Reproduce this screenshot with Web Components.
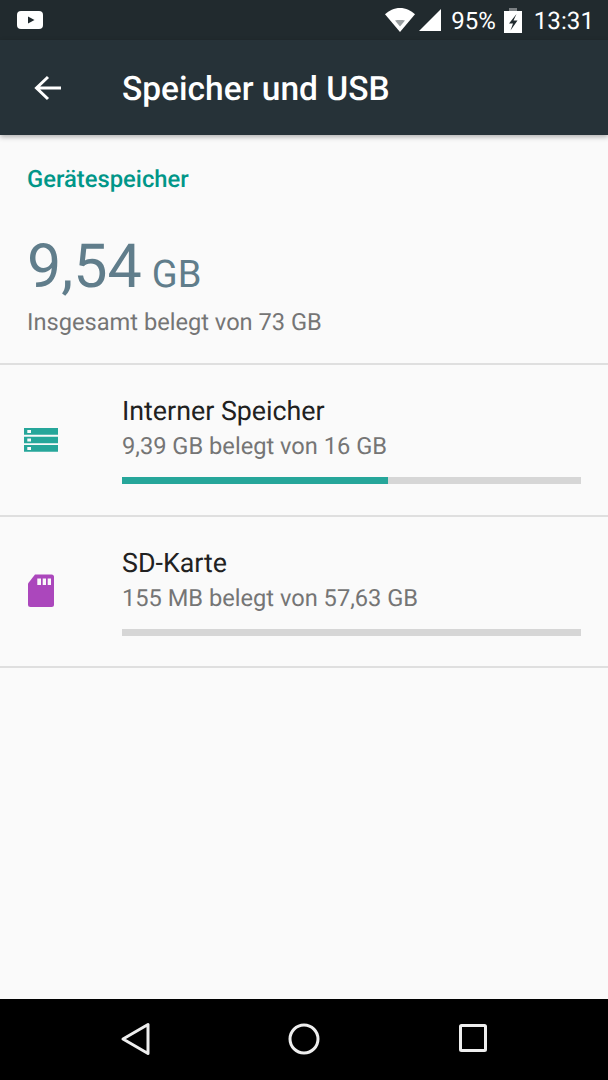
<!DOCTYPE html>
<html><head><meta charset="utf-8"><style>
html,body{margin:0;padding:0;height:100%}
body{width:608px;height:1080px;overflow:hidden;background:#fafafa;font-family:Roboto,sans-serif;text-rendering:geometricPrecision}
</style></head><body>
<settings-screen>
<status-bar slot="top"></status-bar>
<app-bar slot="top" title="Speicher und USB"></app-bar>
<storage-summary label="Gerätespeicher" value="9,54" unit="GB" note="Insgesamt belegt von 73 GB"></storage-summary>
<storage-row h="150" name="Interner Speicher" detail="9,39 GB belegt von 16 GB" pct="58"><svg slot="icon" width="36" height="26" viewBox="0 0 36 26"><path fill="#26a69a" d="M0 1h34v6.700H0zM0 9.700h34v6.600H0zM0 18h34v6.700H0z"/><path fill="#fafafa" d="M3.300 3h3.700v3H3.300zM3.300 11.500h3.700v3H3.300zM3.300 20h3.700v3H3.300z"/></svg></storage-row>
<storage-row h="149" name="SD-Karte" detail="155 MB belegt von 57,63 GB" pct="0"><svg slot="icon" width="36" height="36" viewBox="0 1 36 36"><path fill="#ab47bc" d="M11 1.500h16.500a2.500 2.500 0 0 1 2.500 2.500v27.500a2.500 2.500 0 0 1-2.500 2.500H6.500A2.500 2.500 0 0 1 4 31.500V10.500z"/><path fill="#fafafa" d="M13.300 5.500H17v6.500h-3.700zM18.700 5.500H22v6.500h-3.300zM23.700 5.500H27v6.500h-3.300z"/></svg></storage-row>
<nav-bar slot="bottom"></nav-bar>
</settings-screen>
<script>
function def(name, render){
  customElements.define(name, class extends HTMLElement{
    connectedCallback(){
      if(this.shadowRoot) return;
      this.attachShadow({mode:'open'}).innerHTML = render(this);
    }
  });
}
def('settings-screen', ()=>`<style>
:host{display:flex;flex-direction:column;height:1080px}
.top{position:relative;z-index:1;flex:none}
main{flex:1;min-height:0;display:flex;flex-direction:column}
</style><div class="top"><slot name="top"></slot></div><main><slot></slot></main><slot name="bottom"></slot>`);
def('status-bar', ()=>`<style>
:host{display:flex;align-items:center;height:40px;background:#212a2e;color:#fff;padding:0 14px 0 17px;font:400 24.200px Roboto,sans-serif}
.sp{flex:1}
svg{display:block;flex:none}
.pct{margin-left:10px;margin-top:2px;font-size:24px}
.time{margin-left:12px;margin-top:2px}
.bat{margin-left:8px}
.sig{margin-left:4px}
</style>
<svg width="27" height="20" viewBox="0 0 27 20"><rect y="1" width="26" height="18" rx="4" fill="#fff"/><path d="M11 6.500l6.500 3.500-6.500 3.500z" fill="#212a2e"/></svg>
<span class="sp"></span>
<svg width="30" height="24" viewBox="0 0 30 24"><path d="M0 6.300C4 2.500 9 0 15 0s11 2.500 15 6.300L15 24z" fill="#fff"/><path d="M10 12.500C11.500 12 13 12 15 12s3.500 0 5 .5L15 18.500z" fill="#9a9fa1"/></svg>
<svg class="sig" width="22" height="22" viewBox="0 0 22 22"><path d="M0 22L22 0v22z" fill="#fff"/></svg>
<span class="pct">95%</span>
<svg class="bat" width="18" height="25" viewBox="0 0 18 25"><path d="M5 0h8v3H5z" fill="#7b8083"/><path d="M0 3h18v22H0z" fill="#fff"/><path d="M12.500 6L5 15.500h4L6.500 22.500 13.500 12.500H9.500z" fill="#212a2e"/></svg>
<span class="time">13:31</span>`);
def('app-bar', el=>`<style>
:host{display:flex;align-items:center;height:95px;background:#263238;box-shadow:0 2px 5px rgba(0,0,0,.3)}
svg{display:block;flex:none;margin-left:33px;margin-right:61px}
h1{margin:4px 0 0;color:#fff;font:500 33.500px Roboto,sans-serif}
</style><svg width="28" height="26" viewBox="0 0 28 26"><path d="M28 13H3.500M15 2L3.500 13 15 24" fill="none" stroke="#fff" stroke-width="3"/></svg><h1>${el.getAttribute('title')}</h1>`);
def('storage-summary', el=>`<style>
:host{display:block;height:228px;padding:0 0 0 27px;border-bottom:2px solid #dfdfdf}
.label{color:#009688;font:500 23.800px/28px Roboto,sans-serif;padding-top:30px}
.big{color:#607d8b;margin-top:39px;height:68px;display:flex;align-items:baseline;font:400 61px/68px Roboto,sans-serif;gap:10px}
.unit{font-size:38px}
.note{color:#757575;font:400 23.650px/28px Roboto,sans-serif;margin-top:8px}
</style><div class="label">${el.getAttribute('label')}</div><div class="big"><span>${el.getAttribute('value')}</span><span class="unit">${el.getAttribute('unit')}</span></div><div class="note">${el.getAttribute('note')}</div>`);
def('storage-row', el=>`<style>
:host{display:flex;height:${el.getAttribute('h')}px;border-bottom:2px solid #dfdfdf}
.ic{width:122px;flex:none;display:flex;align-items:center;padding-left:24px;box-sizing:border-box}
.txt{flex:1;min-width:0;padding-right:27px}
.name{color:#212121;font:400 26.800px/32px Roboto,sans-serif;margin-top:30px}
.detail{color:#757575;font:400 23.650px/28px Roboto,sans-serif;margin-top:5px}
.bar{height:7px;background:#d6d6d6;margin-top:17px}
.fill{height:100%;background:#26a69a;width:${el.getAttribute('pct')}%}
</style><div class="ic"><slot name="icon"></slot></div><div class="txt"><div class="name">${el.getAttribute('name')}</div><div class="detail">${el.getAttribute('detail')}</div><div class="bar"><div class="fill"></div></div></div>`);
def('nav-bar', ()=>`<style>
:host{display:flex;height:81px;background:#000;align-items:center;justify-content:center;position:relative}
svg{position:absolute;top:23px;display:block}
</style>
<svg style="left:120px" width="32" height="34" viewBox="0 0 32 34"><path d="M3 17L28 2.500v29z" fill="none" stroke="#eee" stroke-width="3" stroke-linejoin="round"/></svg>
<svg style="left:287px" width="34" height="34" viewBox="0 0 34 34"><circle cx="17" cy="17" r="14" fill="none" stroke="#eee" stroke-width="3"/></svg>
<svg style="left:457px" width="32" height="34" viewBox="0 0 32 34"><rect x="3.500" y="3.500" width="25" height="25" rx="1" fill="none" stroke="#eee" stroke-width="3"/></svg>`);
</script>
</body></html>
